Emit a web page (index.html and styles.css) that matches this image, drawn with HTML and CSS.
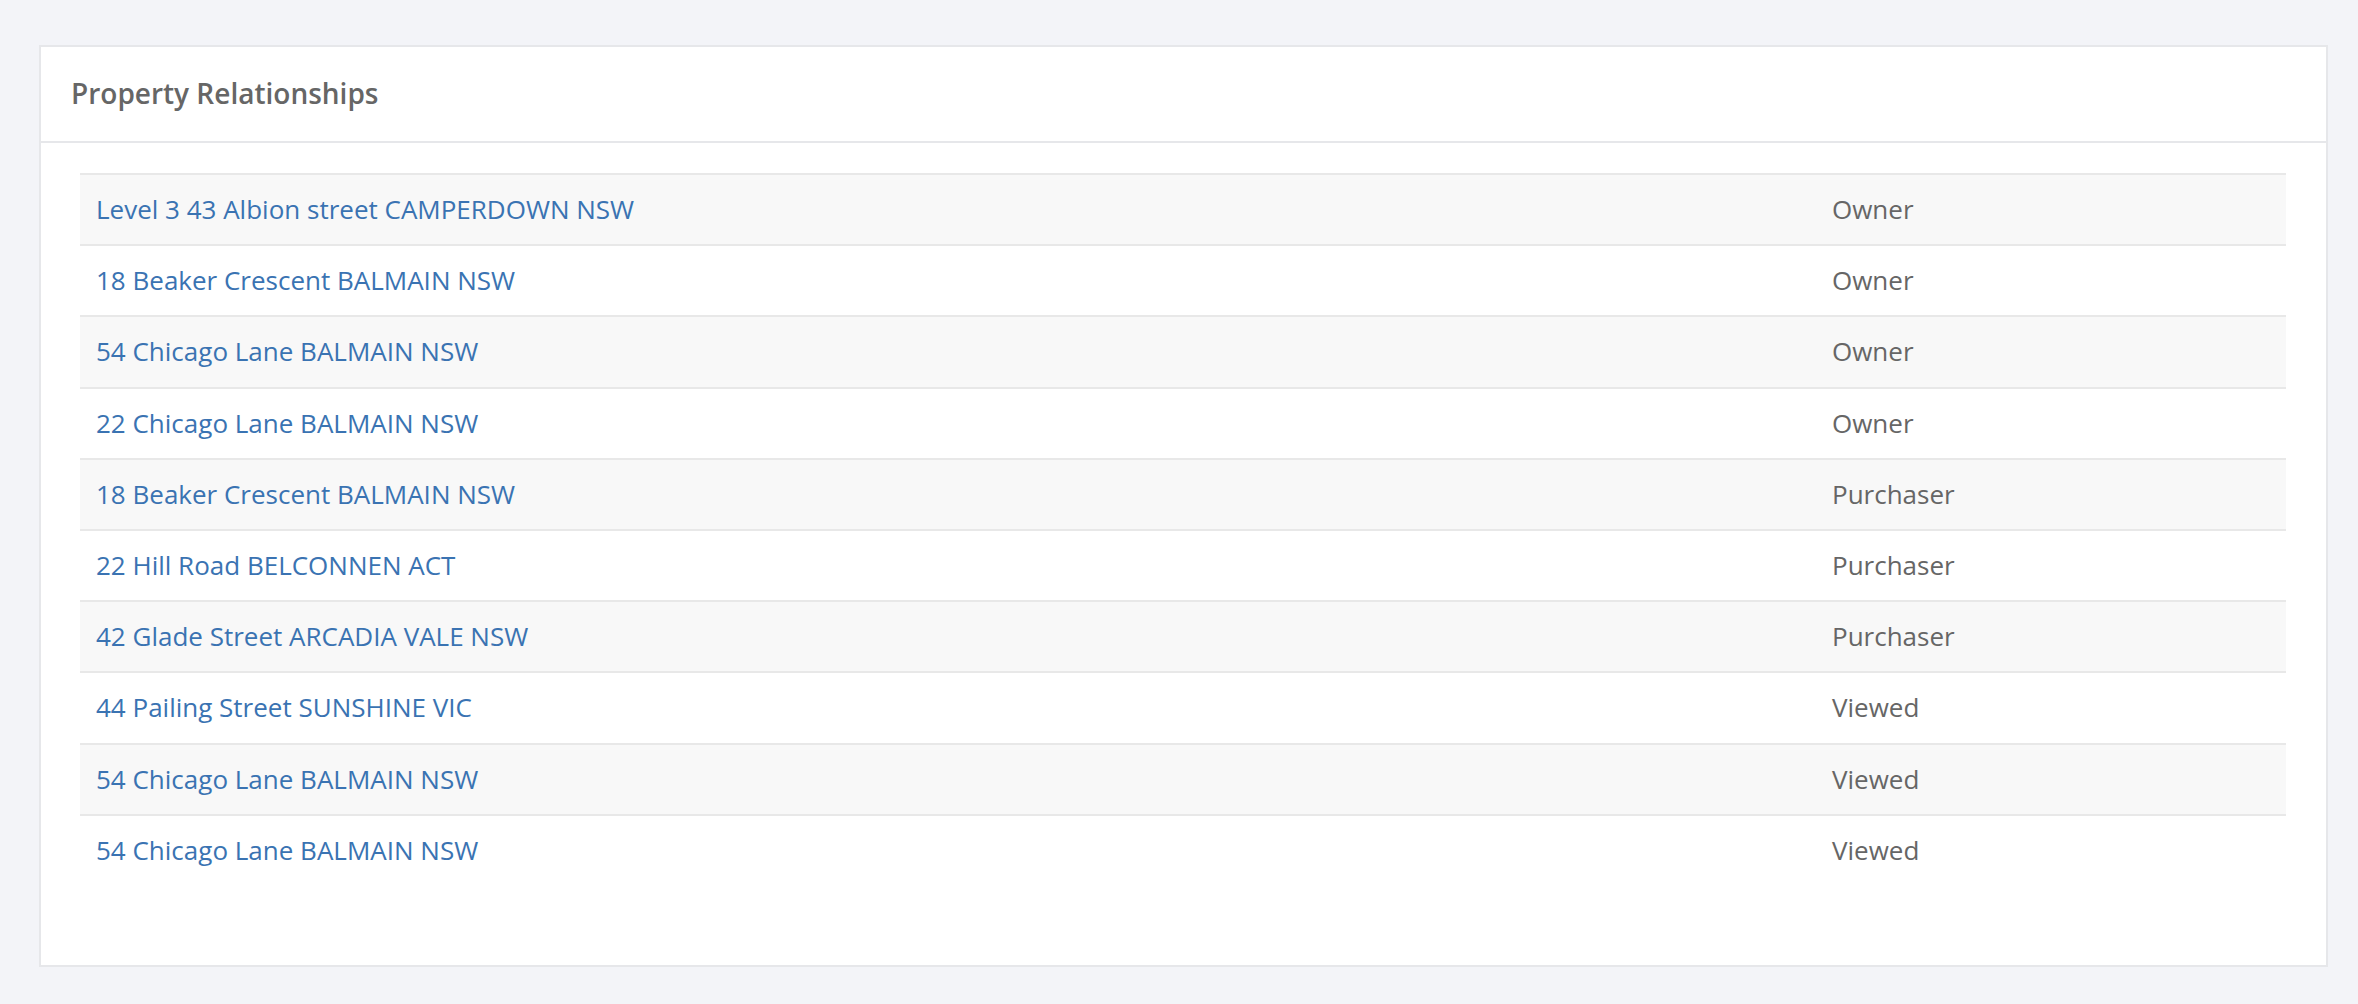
FILE: index.html
```html
<!DOCTYPE html>
<html>
<head>
<meta charset="utf-8">
<link rel="stylesheet" href="styles.css">
</head>
<body>
<div class="page">
  <section class="panel">
    <header class="panel-heading">
      <h2 class="panel-title">Property Relationships</h2>
    </header>
    <div class="panel-body">
      <table class="rel-table">
        <tbody>
          <tr><td class="addr"><a href="#">Level 3 43 Albion street CAMPERDOWN NSW</a></td><td class="role">Owner</td></tr>
          <tr><td class="addr"><a href="#">18 Beaker Crescent BALMAIN NSW</a></td><td class="role">Owner</td></tr>
          <tr><td class="addr"><a href="#">54 Chicago Lane BALMAIN NSW</a></td><td class="role">Owner</td></tr>
          <tr><td class="addr"><a href="#">22 Chicago Lane BALMAIN NSW</a></td><td class="role">Owner</td></tr>
          <tr><td class="addr"><a href="#">18 Beaker Crescent BALMAIN NSW</a></td><td class="role">Purchaser</td></tr>
          <tr><td class="addr"><a href="#">22 Hill Road BELCONNEN ACT</a></td><td class="role">Purchaser</td></tr>
          <tr><td class="addr"><a href="#">42 Glade Street ARCADIA VALE NSW</a></td><td class="role">Purchaser</td></tr>
          <tr><td class="addr"><a href="#">44 Pailing Street SUNSHINE VIC</a></td><td class="role">Viewed</td></tr>
          <tr><td class="addr"><a href="#">54 Chicago Lane BALMAIN NSW</a></td><td class="role">Viewed</td></tr>
          <tr><td class="addr"><a href="#">54 Chicago Lane BALMAIN NSW</a></td><td class="role">Viewed</td></tr>
        </tbody>
      </table>
    </div>
  </section>
</div>
</body>
</html>
```
FILE: styles.css
```css
html, body {
  margin: 0;
  padding: 0;
}
body {
  background: #f3f4f8;
  font-family: "Open Sans", "Liberation Sans", sans-serif;
  color: #666666;
}
.page {
  padding: 45px 30px 39px 39px;
}
.panel {
  background: #ffffff;
  border: 2px solid #e6e7ea;
}
.panel-heading {
  box-sizing: border-box;
  height: 96px;
  border-bottom: 2px solid #e6e7ea;
  display: flex;
  align-items: center;
  padding: 0 30px 2px;
}
.panel-title {
  margin: 0;
  font-size: 28px;
  font-weight: 600;
  color: #666666;
}
.panel-body {
  padding: 30px 40px 80px 39px;
}
.rel-table {
  width: 100%;
  border-collapse: collapse;
  border-spacing: 0;
}
.rel-table td {
  border-top: 2px solid #e8e8e8;
  padding: 16px 16px;
  font-size: 26px;
  line-height: 37.2px;
  text-align: left;
  vertical-align: middle;
}
.rel-table tr:nth-child(odd) td {
  background: #f8f8f8;
}
.rel-table td.addr {
  width: 1704px;
}
.rel-table a {
  color: #3a73b2;
  text-decoration: none;
}
.rel-table td.role {
  color: #666666;
}
```
